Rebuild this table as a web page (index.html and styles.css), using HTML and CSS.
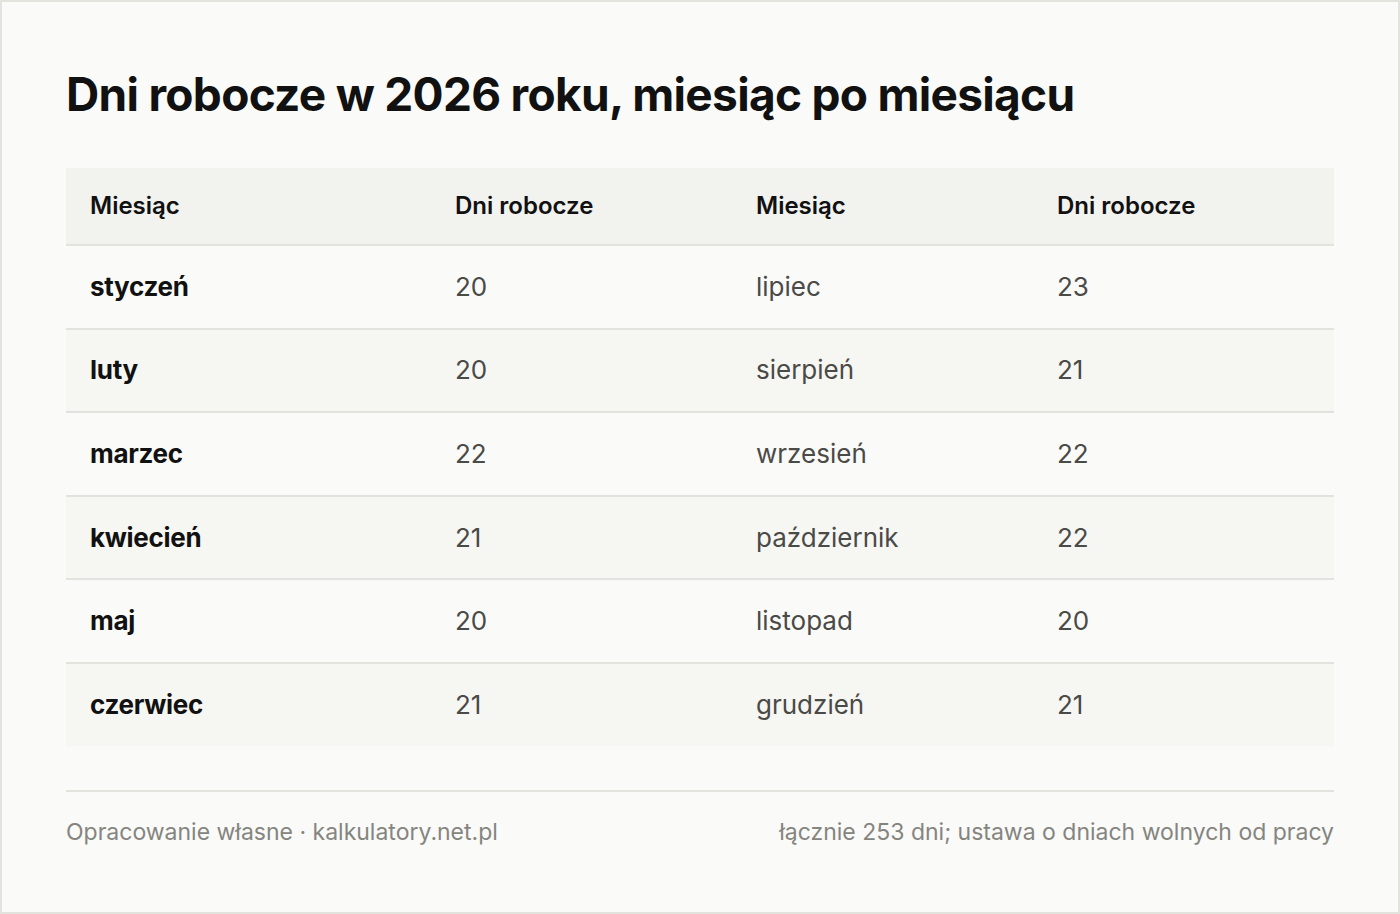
FILE: index.html
```html
<!DOCTYPE html>
<html lang="pl">
<head>
<meta charset="utf-8">
<title>Dni robocze w 2026 roku</title>
<link rel="stylesheet" href="styles.css">
</head>
<body>
<div class="page">
  <h1 class="title">Dni robocze w 2026 roku, miesiąc po miesiącu</h1>
  <div class="table">
    <div class="row head">
      <div class="cell">Miesiąc</div>
      <div class="cell">Dni robocze</div>
      <div class="cell">Miesiąc</div>
      <div class="cell">Dni robocze</div>
    </div>
    <div class="row">
      <div class="cell month">styczeń</div>
      <div class="cell">20</div>
      <div class="cell">lipiec</div>
      <div class="cell">23</div>
    </div>
    <div class="row alt">
      <div class="cell month">luty</div>
      <div class="cell">20</div>
      <div class="cell">sierpień</div>
      <div class="cell">21</div>
    </div>
    <div class="row">
      <div class="cell month">marzec</div>
      <div class="cell">22</div>
      <div class="cell">wrzesień</div>
      <div class="cell">22</div>
    </div>
    <div class="row alt">
      <div class="cell month">kwiecień</div>
      <div class="cell">21</div>
      <div class="cell">październik</div>
      <div class="cell">22</div>
    </div>
    <div class="row">
      <div class="cell month">maj</div>
      <div class="cell">20</div>
      <div class="cell">listopad</div>
      <div class="cell">20</div>
    </div>
    <div class="row alt last">
      <div class="cell month">czerwiec</div>
      <div class="cell">21</div>
      <div class="cell">grudzień</div>
      <div class="cell">21</div>
    </div>
  </div>
  <div class="footer">
    <span>Opracowanie własne · kalkulatory.net.pl</span>
    <span>łącznie 253 dni; ustawa o dniach wolnych od pracy</span>
  </div>
</div>
</body>
</html>
```

FILE: styles.css
```css
* { box-sizing: border-box; }
html, body { margin: 0; padding: 0; }
body {
  background: #fafaf8;
  font-family: Inter, "Noto Sans", "Liberation Sans", sans-serif;
  color: #111111;
}
.page {
  width: 1400px;
  height: 914px;
  border: 2px solid #e3e3dd;
  background: #fafaf8;
  padding: 64px 64px 0 64px;
}
.title {
  margin: 0;
  font-size: 46px;
  line-height: 57px;
  font-weight: 700;
  letter-spacing: -0.7px;
  color: #111111;
}
.table {
  margin-top: 45px;
  width: 1268px;
}
.row {
  display: grid;
  grid-template-columns: 365px 301px 301px 301px;
  height: 83.6px;
  border-bottom: 2px solid #e3e3dd;
  align-items: center;
  font-size: 26px;
  color: #4a4a47;
}
.row.head {
  height: 78px;
  background: #f2f2ef;
  font-size: 24px;
  font-weight: 600;
  color: #111111;
}
.row.alt { background: #f6f6f3; }
.row.last { border-bottom: none; height: 81.6px; }
.cell {
  padding: 0 24px;
  line-height: 30px;
}
.cell.month {
  font-weight: 700;
  letter-spacing: -0.3px;
  color: #111111;
}
.footer {
  margin-top: 44px;
  border-top: 2px solid #e3e3dd;
  padding-top: 26px;
  display: flex;
  justify-content: space-between;
  font-size: 23px;
  line-height: 28px;
  color: #858580;
}
```
